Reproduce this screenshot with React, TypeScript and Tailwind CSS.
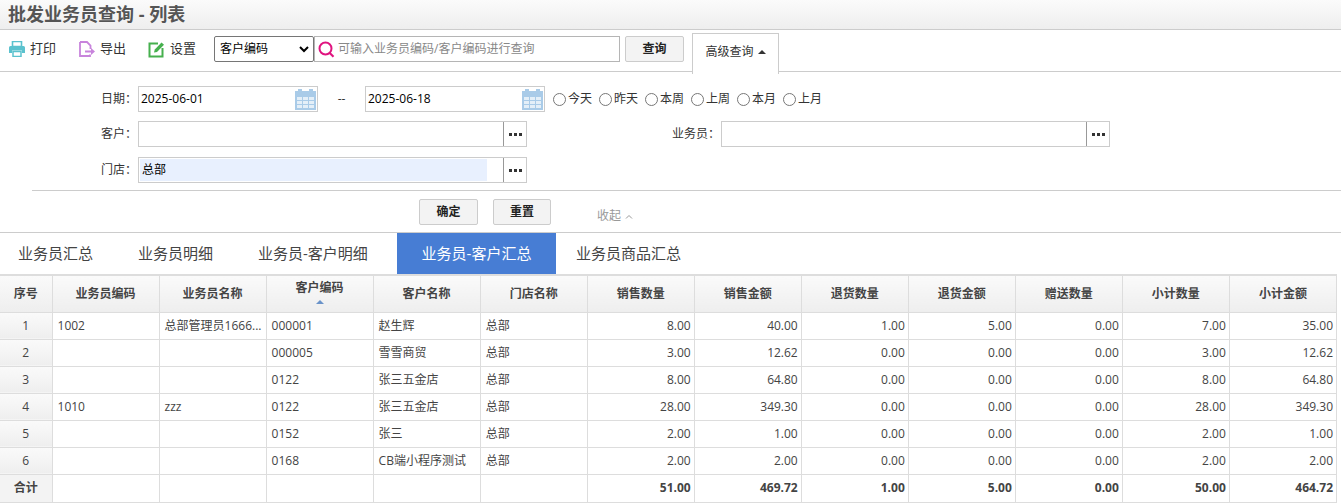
import React from "react";

const font = { };
const headers = ["序号","业务员编码","业务员名称","客户编码","客户名称","门店名称","销售数量","销售金额","退货数量","退货金额","赠送数量","小计数量","小计金额"];
const rows = [
  ["1","1002","总部管理员1666...","000001","赵生辉","总部","8.00","40.00","1.00","5.00","0.00","7.00","35.00"],
  ["2","","","000005","雪雪商贸","总部","3.00","12.62","0.00","0.00","0.00","3.00","12.62"],
  ["3","","","0122","张三五金店","总部","8.00","64.80","0.00","0.00","0.00","8.00","64.80"],
  ["4","1010","zzz","0122","张三五金店","总部","28.00","349.30","0.00","0.00","0.00","28.00","349.30"],
  ["5","","","0152","张三","总部","2.00","1.00","0.00","0.00","0.00","2.00","1.00"],
  ["6","","","0168","CB端小程序测试","总部","2.00","2.00","0.00","0.00","0.00","2.00","2.00"],
];
const totals = ["合计","","","","","","51.00","469.72","1.00","5.00","0.00","50.00","464.72"];

function Calendar() {
  return (
    <svg width="21" height="21" viewBox="0 0 21 21" className="shrink-0">
      <rect x="0" y="2" width="21" height="19" fill="#a9cbe8" />
      <rect x="3" y="0" width="4" height="4" fill="#a9cbe8" />
      <rect x="14" y="0" width="4" height="4" fill="#a9cbe8" />
      {[8, 12, 16].map((y) => [2, 8, 14].map((x) => <rect key={x + "-" + y} x={x} y={y} width="5" height="3" fill="#e4eff8" />))}
    </svg>
  );
}

function Dots() {
  return (
    <div className="w-[23px] h-full flex items-center justify-center gap-[2px] border-l border-[#999]">
      <span className="w-[3px] h-[3px] bg-[#333]" />
      <span className="w-[3px] h-[3px] bg-[#333]" />
      <span className="w-[3px] h-[3px] bg-[#333]" />
    </div>
  );
}

function Picker({ width, value }: { width: string; value?: string }) {
  return (
    <div className={`${width} h-[26px] border border-[#ccc] bg-white flex items-center justify-between`}>
      {value ? (
        <div className="w-[347px] h-[22px] ml-px bg-[#e8f0fe] text-black flex items-center pl-[2px]">{value}</div>
      ) : <div />}
      <Dots />
    </div>
  );
}

function DateBox({ value }: { value: string }) {
  return (
    <div className="w-[180px] h-[26px] border border-[#ccc] bg-white flex items-center justify-between pl-[2px] pr-[1px] text-black">
      <span>{value}</span>
      <Calendar />
    </div>
  );
}

function Radio({ label }: { label: string }) {
  return (
    <label className="flex items-center gap-[2px] text-[#333]">
      <span className="w-[13px] h-[13px] rounded-full border border-[#777] bg-white" />
      <span>{label}</span>
    </label>
  );
}

function ToolBtn({ icon, label, cls }: { icon: React.ReactNode; label: string; cls: string }) {
  return (
    <div className={`flex items-center gap-[5px] text-[#333] ${cls}`}>
      {icon}
      <span>{label}</span>
    </div>
  );
}

export default function App() {
  const numCell = "text-right pr-[3px]";
  return (
    <div className="w-[1341px] h-[504px] overflow-hidden bg-white text-[12px] text-[#333] font-['Open_Sans','Noto_Sans_CJK_SC',sans-serif]">
      <div className="h-[30px] border-b border-[#ccc] bg-gradient-to-b from-[#fbfbfb] to-[#eeeeee] pl-[8px] flex items-center text-[18px] font-bold text-[#555] leading-none pb-[2px]">
        批发业务员查询 - 列表
      </div>

      <div className="h-[42px] border-b border-[#ccc] flex items-start pl-[9px] pt-[6px] text-[13px]">
        <ToolBtn
          cls="w-[70px] h-[24px] mt-px"
          label="打印"
          icon={
            <svg width="16" height="16" viewBox="0 0 16 16">
              <path d="M3.5 0.5h9v5h-9z" fill="none" stroke="#5bc2ce" strokeWidth="1.6" />
              <path d="M1.5 5h13a1.5 1.5 0 0 1 1.5 1.5V12h-3V9.5H3V12H0V6.500A1.500 1.500 0 0 1 1.500 5z" fill="#5bc2ce" />
              <path d="M4 10.500h8V15.500H4z" fill="none" stroke="#5bc2ce" strokeWidth="1.500" />
            </svg>
          }
        />
        <ToolBtn
          cls="w-[69px] h-[24px] mt-px"
          label="导出"
          icon={
            <svg width="16" height="16" viewBox="0 0 16 16">
              <path d="M1 1h7l3.500 3.500V8M11 13.500V15H1V1" fill="none" stroke="#c884dc" strokeWidth="1.800" />
              <path d="M6 9.500h6V7l4 3.500-4 3.500v-2.500H6z" fill="#c884dc" />
            </svg>
          }
        />
        <ToolBtn
          cls="w-[66px] h-[24px] mt-px"
          label="设置"
          icon={
            <svg width="17" height="17" viewBox="0 0 17 17">
              <path d="M10 2.500H1.500v13h13V7" fill="none" stroke="#46b04e" strokeWidth="2" />
              <path d="M6 11.500l.8-3L13.500 1.500 16 3.800 9 11z" fill="#46b04e" />
            </svg>
          }
        />
        <div className="w-[100px] h-[26px] border border-[#767676] rounded-[2px] flex items-center justify-between pl-[5px] pr-[4px] text-[12px] text-black">
          <span>客户编码</span>
          <svg width="10" height="7" viewBox="0 0 10 7"><path d="M1 1l4 4 4-4" fill="none" stroke="#000" strokeWidth="2" /></svg>
        </div>
        <div className="w-[306px] h-[26px] border border-[#b5b5b5] flex items-center pl-[3px] gap-[3px] text-[12px] text-[#888]">
          <svg width="17" height="17" viewBox="0 0 17 17" className="shrink-0">
            <circle cx="7.500" cy="7.500" r="6" fill="none" stroke="#e0137f" strokeWidth="2" />
            <path d="M11.500 11.800l4 4" stroke="#e0137f" strokeWidth="2.200" />
          </svg>
          <span>可输入业务员编码/客户编码进行查询</span>
        </div>
        <div className="ml-[5px] w-[59px] h-[26px] border border-[#ccc] rounded-[2px] bg-[#f3f3f3] flex items-center justify-center font-bold text-[#222] text-[12px]">查询</div>
        <div className="ml-[8px] w-[87px] h-[41px] -mt-[3px] border border-b-0 border-[#ccc] bg-white relative z-10 flex items-center justify-center gap-[4px] text-[12px] text-[#333] pb-[4px] mb-[-1px]">
          <span>高级查询</span>
          <span className="w-0 h-0 border-x-[4px] border-x-transparent border-b-[4px] border-b-[#333]" />
        </div>
      </div>

      <div className="h-[119px] pt-[14px]">
        <div className="flex items-center h-[26px]">
          <div className="w-[138px] pr-[1px] text-right">日期：</div>
          <DateBox value="2025-06-01" />
          <div className="w-[47px] text-center">--</div>
          <DateBox value="2025-06-18" />
          <div className="flex items-center gap-[7px] ml-[8px]">
            <Radio label="今天" />
            <Radio label="昨天" />
            <Radio label="本周" />
            <Radio label="上周" />
            <Radio label="本月" />
            <Radio label="上月" />
          </div>
        </div>
        <div className="flex items-center h-[26px] mt-[9px]">
          <div className="w-[138px] pr-[1px] text-right">客户：</div>
          <Picker width="w-[389px]" />
          <div className="w-[194px] pr-[1px] text-right">业务员：</div>
          <Picker width="w-[389px]" />
        </div>
        <div className="flex items-center h-[26px] mt-[10px]">
          <div className="w-[138px] pr-[1px] text-right">门店：</div>
          <Picker width="w-[389px]" value="总部" />
        </div>
        <div className="ml-[32px] mt-[7px] border-t border-[#ccc]" />
      </div>

      <div className="h-[42px] border-b border-[#ccc] flex items-start pl-[419px] pt-[8px]">
        <div className="w-[59px] h-[26px] border border-[#ccc] rounded-[2px] bg-[#f3f3f3] flex items-center justify-center font-bold text-[#222]">确定</div>
        <div className="ml-[15px] w-[58px] h-[26px] border border-[#ccc] rounded-[2px] bg-[#f3f3f3] flex items-center justify-center font-bold text-[#222]">重置</div>
        <div className="ml-[46px] mt-[8px] flex items-center gap-[4px] text-[#999]">
          <span>收起</span>
          <svg width="8" height="5" viewBox="0 0 8 5"><path d="M1 4.500L4 1.500l3 3" fill="none" stroke="#999" strokeWidth="1" /></svg>
        </div>
      </div>

      <div className="h-[41px] flex text-[15px] text-[#444]">
        <div className="w-[118px] flex items-center pl-[18px]">业务员汇总</div>
        <div className="w-[120px] flex items-center pl-[20px]">业务员明细</div>
        <div className="w-[159px] flex items-center pl-[20px]">业务员-客户明细</div>
        <div className="w-[159px] flex items-center justify-center bg-[#477dd4] text-white">业务员-客户汇总</div>
        <div className="flex items-center pl-[20px]">业务员商品汇总</div>
      </div>

      <table className="w-[1337px] table-fixed border-collapse border-t border-b border-[#ddd] text-[#444]" style={{ borderTopWidth: 2 }}>
        <colgroup>
          <col className="w-[52px]" />
          {headers.slice(1).map((h) => <col key={h} className="w-[107px]" />)}
        </colgroup>
        <thead>
          <tr className="h-[37px]">
            {headers.map((h, i) => (
              <th key={h} className="border border-[#ddd] border-t-0 border-l-0 bg-gradient-to-b from-[#fafafa] to-[#eeeeee] font-bold text-center text-[#444] p-0">
                {i === 3 ? (
                  <div className="flex flex-col items-center leading-[16px] -mt-[3px]">
                    <span>{h}</span>
                    <span className="mt-[4px] w-0 h-0 border-x-[4px] border-x-transparent border-b-[4px] border-b-[#6a93c9]" />
                  </div>
                ) : h}
              </th>
            ))}
          </tr>
        </thead>
        <tbody>
          {rows.map((r) => (
            <tr key={r[0]} className="h-[27px]">
              {r.map((c, i) => (
                <td key={i} className={`border border-[#ddd] border-l-0 p-0 whitespace-nowrap overflow-hidden ${i === 0 ? "text-center bg-gradient-to-b from-[#fafafa] to-[#eeeeee]" : i >= 6 ? numCell : "pl-[5px]"}`}>
                  {c}
                </td>
              ))}
            </tr>
          ))}
          <tr className="h-[28px]">
            {totals.map((c, i) => (
              <td key={i} className={`border border-[#ddd] border-l-0 p-0 font-bold ${i === 0 ? "text-center bg-[#f3f3f3]" : i >= 6 ? numCell : ""}`}>
                {c}
              </td>
            ))}
          </tr>
        </tbody>
      </table>
    </div>
  );
}
